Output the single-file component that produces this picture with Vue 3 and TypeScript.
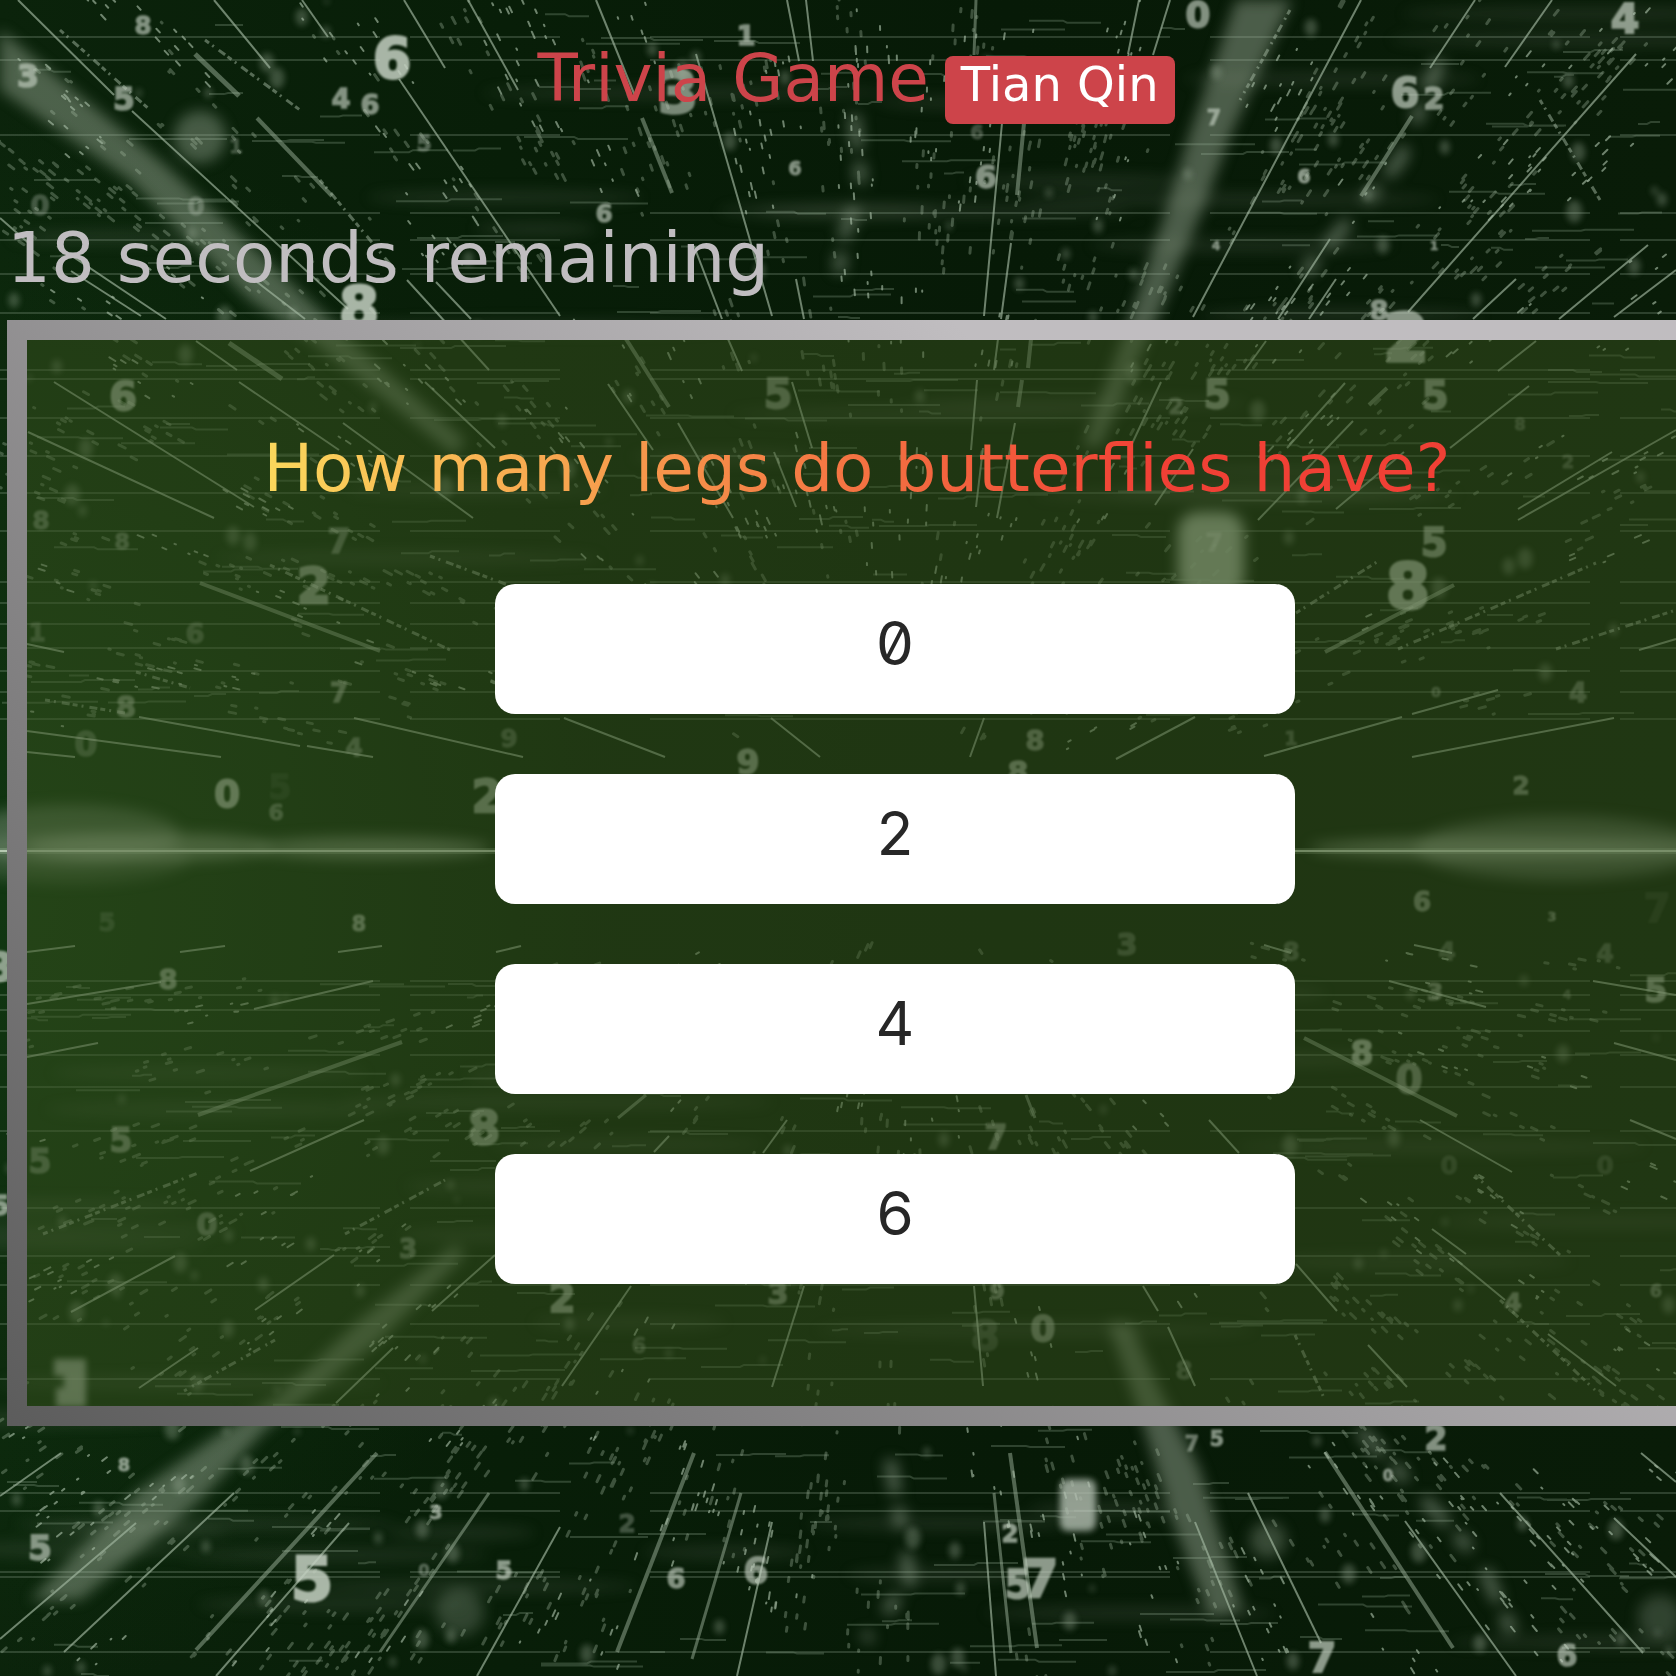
<script setup lang="ts">
import { ref } from 'vue'

type Ray = [number, number, number, number, number?]
type Digit = [string, number, number, number, number?]

const player = 'Tian Qin'
const secondsLeft = ref(18)
const question = 'How many legs do butterflies have?'
const answers = ['0', '2', '4', '6']

// Light rays of the backdrop: x1, y1, x2, y2 and an optional width.
const rays: Ray[] = [
  [132, 111, 348, 309], [18, 0, 114, 95], [399, 79, 560, 316], [214, 0, 270, 68], [302, 0, 328, 37],
  [404, 0, 445, 68], [468, 0, 518, 90], [195, 54, 239, 96, 5], [257, 118, 332, 196, 4], [0, 218, 32, 246],
  [57, 246, 166, 319], [71, 271, 141, 316], [257, 282, 305, 319], [407, 280, 489, 370], [436, 282, 471, 319],
  [196, 341, 237, 370], [239, 382, 339, 450], [229, 343, 282, 379, 5], [54, 382, 254, 507], [28, 432, 214, 518],
  [343, 423, 473, 518], [425, 382, 495, 448], [596, 0, 635, 96], [642, 118, 672, 193, 4], [696, 54, 772, 316],
  [694, 246, 722, 319], [787, 0, 799, 61], [806, 0, 813, 61], [796, 279, 804, 319], [1002, 123, 984, 316],
  [1024, 123, 1017, 195, 4], [1011, 243, 1001, 319], [976, 0, 974, 55, 3], [998, 339, 994, 370], [977, 380, 971, 450],
  [1031, 339, 1028, 368, 4], [1022, 380, 1018, 407, 4], [983, 448, 976, 507], [1015, 423, 997, 518], [626, 339, 669, 407, 4],
  [728, 339, 742, 371], [608, 384, 653, 450], [678, 423, 733, 518], [792, 382, 812, 448], [774, 452, 796, 507],
  [1361, 0, 1193, 317], [1552, 0, 1505, 67], [1475, 0, 1430, 68], [1636, 54, 1408, 312], [1412, 116, 1361, 196, 4],
  [1330, 239, 1278, 319], [1648, 245, 1559, 319], [1676, 270, 1614, 317], [1336, 279, 1309, 319], [1516, 279, 1473, 319],
  [1139, 0, 1128, 54], [1170, 0, 1153, 55], [1266, 341, 1245, 370], [1536, 341, 1498, 371], [1161, 382, 1130, 448],
  [1345, 383, 1287, 448], [1387, 388, 1369, 405, 4], [1353, 421, 1258, 520], [1193, 449, 1155, 505], [1404, 452, 1336, 509],
  [1529, 386, 1450, 448], [1612, 452, 1518, 509], [1676, 430, 1518, 520], [200, 583, 380, 651, 4], [139, 717, 300, 746],
  [307, 746, 373, 757], [354, 718, 523, 757], [27, 731, 221, 757], [27, 752, 75, 757], [27, 644, 64, 652],
  [27, 1004, 161, 982], [254, 1009, 373, 981], [27, 1057, 98, 1043], [198, 1115, 402, 1042, 4], [27, 952, 75, 946],
  [180, 952, 225, 946], [338, 952, 382, 946], [496, 952, 521, 946], [1195, 717, 1116, 759], [1454, 585, 1325, 652, 4],
  [1498, 690, 1412, 714], [1402, 717, 1264, 756], [1614, 718, 1412, 757], [1676, 639, 1639, 650], [1389, 981, 1486, 1007],
  [1593, 981, 1676, 995], [1304, 1038, 1457, 1116, 4], [1614, 1043, 1676, 1060], [1264, 945, 1291, 953], [1414, 945, 1452, 953],
  [564, 718, 665, 757], [771, 718, 820, 757], [984, 718, 970, 757], [618, 1118, 646, 1095, 3], [1026, 1095, 1035, 1118, 3],
  [250, 1171, 364, 1120], [175, 1256, 71, 1312], [334, 1255, 255, 1310], [495, 1255, 432, 1311], [198, 1348, 139, 1388],
  [393, 1348, 336, 1403], [61, 1453, 0, 1496], [136, 1523, 0, 1639], [234, 1493, 64, 1652], [377, 1453, 196, 1650, 4],
  [349, 1523, 216, 1676], [489, 1493, 380, 1652, 3], [560, 1527, 477, 1676], [694, 1453, 617, 1652, 4], [741, 1493, 692, 1659, 3],
  [772, 1522, 737, 1676], [984, 1522, 996, 1676], [994, 1493, 1011, 1653, 3], [1010, 1453, 1037, 1648, 4], [631, 1286, 562, 1386],
  [669, 1136, 654, 1152], [787, 1120, 763, 1153], [804, 1286, 772, 1387], [974, 1286, 983, 1386], [1195, 1522, 1257, 1676],
  [1248, 1493, 1321, 1643], [1325, 1452, 1453, 1648, 4], [1405, 1521, 1516, 1676], [1500, 1493, 1643, 1653], [1614, 1518, 1676, 1577],
  [1641, 1453, 1676, 1482], [1296, 1264, 1337, 1311], [1368, 1345, 1407, 1387], [1448, 1253, 1505, 1300], [1420, 1120, 1512, 1172],
  [1548, 1334, 1616, 1386], [1143, 1286, 1158, 1311], [1168, 1327, 1195, 1386], [1630, 1120, 1676, 1139], [1209, 1120, 1239, 1153],
  [1432, 1229, 1466, 1254],
]

// Dotted trails that follow the same perspective.
const trails: Ray[] = [
  [43, 1234, 198, 1173], [345, 1234, 445, 1180], [275, 1340, 184, 1391], [1296, 613, 1380, 560], [1398, 649, 1596, 563],
  [1556, 649, 1676, 610], [270, 565, 450, 650], [430, 556, 508, 585], [136, 672, 190, 688], [45, 700, 125, 713],
  [1475, 1175, 1560, 1255], [1295, 1335, 1325, 1400], [1500, 1300, 1595, 1390], [60, 30, 150, 110], [205, 40, 300, 110],
  [320, 180, 395, 270], [1540, 100, 1600, 200], [1290, 10, 1240, 100],
]

// Floating digits: character, centre x, centre y, height and opacity.
const digits: Digit[] = [
  ['8', 143, 25, 18], ['3', 28, 75, 23], ['5', 124, 98, 23], ['6', 392, 57, 40, 0.85], ['4', 341, 98, 20], ['6', 370, 104, 20],
  ['5', 424, 143, 16, 0.4], ['0', 196, 206, 18, 0.3], ['0', 40, 205, 20, 0.3], ['8', 359, 307, 42, 0.85], ['6', 123, 395, 29],
  ['7', 339, 541, 24, 0.4], ['8', 122, 541, 16, 0.4], ['8', 41, 520, 18, 0.4], ['1', 236, 146, 14, 0.3], ['3', 678, 92, 42, 0.6],
  ['6', 795, 168, 14], ['6', 986, 176, 23], ['6', 604, 213, 18], ['1', 746, 35, 20], ['5', 778, 393, 30, 0.5], ['6', 977, 132, 14, 0.3],
  ['0', 1198, 14, 26], ['4', 1625, 18, 30, 0.7], ['6', 1405, 92, 30, 0.7], ['2', 1434, 98, 22], ['7', 1214, 117, 15], ['6', 1304, 176, 14, 0.7],
  ['4', 1216, 245, 9], ['1', 1434, 245, 9], ['8', 1379, 310, 20], ['2', 1406, 337, 48], ['5', 1217, 394, 28, 0.6], ['5', 1435, 395, 28, 0.6],
  ['2', 1176, 406, 16, 0.4], ['2', 1568, 461, 13, 0.3], ['5', 1434, 542, 28, 0.6], ['8', 1520, 424, 12, 0.3], ['7', 1214, 542, 18, 0.4],
  ['2', 314, 585, 36, 0.6], ['6', 195, 633, 20, 0.3], ['7', 339, 692, 19, 0.5], ['8', 126, 706, 21, 0.5], ['1', 37, 632, 18, 0.3],
  ['4', 354, 747, 18, 0.4], ['0', 227, 793, 27, 0.7], ['6', 276, 812, 16, 0.4], ['5', 280, 787, 24, 0.1], ['2', 487, 796, 32, 0.6],
  ['9', 509, 738, 18, 0.3], ['5', 107, 922, 18, 0.2], ['8', 359, 923, 15, 0.6], ['8', 168, 979, 20, 0.6], ['3', 0, 967, 28, 0.7],
  ['0', 86, 744, 24, 0.3], ['9', 748, 762, 24, 0.6], ['8', 1018, 772, 22, 0.6], ['8', 1035, 740, 20, 0.5], ['8', 1408, 585, 46, 0.7],
  ['4', 1578, 692, 19, 0.4], ['0', 1436, 692, 10, 0.4], ['1', 1291, 738, 14, 0.3], ['2', 1521, 785, 18, 0.5], ['6', 1422, 901, 19, 0.5],
  ['3', 1552, 916, 9, 0.5], ['7', 1657, 908, 28, 0.1], ['3', 1435, 991, 17, 0.5], ['5', 1656, 990, 24, 0.6], ['8', 1362, 1053, 24, 0.7],
  ['0', 1409, 1079, 28, 0.5], ['3', 1127, 944, 22, 0.3], ['8', 1291, 951, 18, 0.3], ['4', 1447, 951, 18, 0.3], ['4', 1605, 953, 18, 0.3],
  ['4', 1567, 994, 9, 0.3], ['8', 484, 1127, 34, 0.6], ['5', 121, 1140, 24, 0.5], ['5', 40, 1161, 24, 0.4], ['5', 0, 1205, 20],
  ['0', 207, 1224, 22, 0.4], ['3', 408, 1248, 19, 0.4], ['8', 124, 1464, 13, 0.7], ['3', 436, 1512, 14, 0.7], ['5', 40, 1547, 25],
  ['5', 312, 1578, 44, 0.85], ['5', 504, 1570, 18, 0.7], ['0', 424, 1570, 12, 0.4], ['7', 996, 1137, 24, 0.5], ['2', 562, 1298, 28, 0.6],
  ['3', 778, 1293, 22, 0.5], ['9', 997, 1291, 16, 0.5], ['6', 639, 1345, 15, 0.3], ['8', 985, 1335, 30, 0.2], ['0', 1043, 1328, 26, 0.5],
  ['2', 1010, 1533, 18, 0.7], ['5', 1018, 1584, 28, 0.7], ['7', 1040, 1578, 38, 0.7], ['2', 627, 1523, 18, 0.3], ['6', 676, 1578, 20],
  ['6', 756, 1570, 26], ['8', 1184, 1370, 18, 0.3], ['2', 1436, 1438, 24], ['5', 1217, 1438, 15], ['7', 1192, 1443, 15, 0.5],
  ['0', 1388, 1475, 11], ['7', 1322, 1657, 30, 0.7], ['6', 1567, 1655, 22], ['6', 1656, 1290, 13, 0.4], ['4', 1513, 1302, 18, 0.5],
  ['0', 1449, 1165, 18, 0.2], ['0', 1605, 1165, 18, 0.2],
]

const beams = [
  '0,30 165,165 240,235 330,320 350,340 465,440 455,455 310,340 250,300 130,180 0,90',
  '1236,0 1292,0 1230,136 1202,211 1157,318 1100,446 1083,446 1130,318 1166,211 1189,136',
  '455,1245 465,1255 380,1340 265,1430 200,1500 80,1600 30,1600 140,1490 225,1430 280,1395 360,1320',
  '1108,1323 1130,1323 1160,1390 1200,1470 1243,1610 1210,1616 1172,1520 1145,1430',
]

// Faint horizontal scan lines.
const scans = [
  37, 60, 135, 213, 240, 274, 313, 370, 379, 418, 456, 493, 531, 582, 603, 624, 648, 671,
  692, 719, 981, 995, 1010, 1031, 1055, 1087, 1131, 1208, 1256, 1285, 1324, 1379, 1493, 1511, 1572,
  1577, 1652,
]

// Small seeded generator, so that the dust keeps its place between renders.
let seed = 20117
function random(): number {
  seed = (seed * 1664525 + 1013904223) % 4294967296
  return seed / 4294967296
}

const VANISH_X = 900
const VANISH_Y = 850

function dust(clusters: number): string {
  let d = ''
  for (let i = 0; i < clusters; i++) {
    const cx = random() * 1676
    const cy = random() * 1676
    if (cy > 735 && cy < 945) continue
    const dist = Math.hypot(cx - VANISH_X, cy - VANISH_Y)
    const ux = (cx - VANISH_X) / dist
    const uy = (cy - VANISH_Y) / dist
    const count = 4 + Math.floor(random() * 8)
    for (let j = 0; j < count; j++) {
      const along = (random() - 0.5) * 90
      const x = cx + ux * along + (random() - 0.5) * 44
      const y = cy + uy * along + (random() - 0.5) * 20
      const len = 1 + random() * 6
      d += `M${x.toFixed(1)} ${y.toFixed(1)}l${(ux * len).toFixed(1)} ${(uy * len).toFixed(1)}`
    }
  }
  return d
}

function streaks(count: number): string {
  let d = ''
  for (let i = 0; i < count; i++) {
    const x = random() * 1676
    const y = random() * 1676
    if (y > 720 && y < 975) continue
    const len = 12 + random() * 90
    const bend = Math.round((random() - 0.5) * 5)
    d += `M${x.toFixed(0)} ${y.toFixed(1)}h${(len / 2).toFixed(0)}l4 ${bend}h${(len / 2).toFixed(0)}`
  }
  return d
}

const fineDust = dust(420)
const brightDust = dust(190)
const streakPath = streaks(520)
const scanPath = scans.map((y) => `M0 ${y}H1676`).join('')
const motes = Array.from({ length: 220 }, () => ({ x: random() * 1676, y: random() * 1676, r: 2 + random() * 6 })).filter(
  (m) => m.y < 730 || m.y > 980,
)
const bands = Array.from({ length: 70 }, () => ({ x: random() * 1676, y: random() * 1676, w: 60 + random() * 160 })).filter(
  (b) => b.y < 720 || b.y > 980,
)
</script>

<template>
  <main class="page">
    <svg class="backdrop" viewBox="0 0 1676 1676" preserveAspectRatio="xMidYMid slice" aria-hidden="true">
      <defs>
        <linearGradient id="base" x1="0" x2="1" y1="0" y2="0">
          <stop offset="0" stop-color="#0b230b" />
          <stop offset="0.3" stop-color="#081e08" />
          <stop offset="0.6" stop-color="#071a07" />
          <stop offset="1" stop-color="#091c08" />
        </linearGradient>
        <radialGradient id="glow">
          <stop offset="0" stop-color="#1a5a1c" stop-opacity="0.35" />
          <stop offset="1" stop-color="#1a5a1c" stop-opacity="0" />
        </radialGradient>
        <filter id="soft" x="-30%" y="-30%" width="160%" height="160%"><feGaussianBlur stdDeviation="1.2" /></filter>
        <filter id="fine" x="0" y="0" width="100%" height="100%"><feGaussianBlur stdDeviation="0.5" /></filter>
        <filter id="haze" x="-50%" y="-50%" width="200%" height="200%"><feGaussianBlur stdDeviation="7" /></filter>
        <filter id="mote" x="-20%" y="-20%" width="140%" height="140%"><feGaussianBlur stdDeviation="3" /></filter>
      </defs>
      <rect width="1676" height="1676" fill="url(#base)" />
      <ellipse cx="0" cy="900" rx="600" ry="800" fill="url(#glow)" />

      <g filter="url(#haze)" fill="#a9b9a4">
        <ellipse v-for="(b, i) in bands" :key="'b' + i" :cx="b.x" :cy="b.y" :rx="b.w" ry="7" opacity="0.12" />
        <polygon v-for="b in beams" :key="b" :points="b" opacity="0.42" />
        <circle cx="200" cy="137" r="26" opacity="0.38" />
        <rect x="1178" y="512" width="66" height="85" rx="20" opacity="0.85" />
        <ellipse cx="70" cy="835" rx="110" ry="30" opacity="0.32" />
        <ellipse cx="70" cy="858" rx="120" ry="26" opacity="0.2" />
        <ellipse cx="150" cy="847" rx="125" ry="14" opacity="0.5" />
        <ellipse cx="370" cy="848" rx="120" ry="11" opacity="0.5" />
        <ellipse cx="1560" cy="848" rx="145" ry="32" opacity="0.32" />
        <ellipse cx="1510" cy="848" rx="200" ry="11" opacity="0.5" />
        <circle cx="460" cy="1612" r="24" opacity="0.25" />
        <circle cx="1268" cy="1540" r="18" opacity="0.3" />
        <circle cx="1660" cy="1617" r="22" opacity="0.25" />
        <path
          d="M854 115L862 190L842 240L838 290M1440 60L1400 160L1290 290M1360 1430L1480 1560L1520 1650M890 1460L910 1580L865 1640"
          fill="none"
          stroke="#a9b9a4"
          stroke-width="12"
          stroke-dasharray="34 14 20 26"
          opacity="0.45"
        />
      </g>

      <g filter="url(#mote)" fill="#a9b9a4" opacity="0.32">
        <ellipse v-for="(m, i) in motes" :key="i" :cx="m.x" :cy="m.y" :rx="m.r" :ry="m.r * 1.4" />
      </g>

      <g fill="none" stroke="#a3b8a1" filter="url(#fine)">
        <path :d="scanPath" stroke-width="2" stroke-dasharray="380 30 150 90 520 40" opacity="0.24" />
        <path :d="streakPath" stroke-width="2" opacity="0.26" />
        <path :d="fineDust" stroke-width="3" stroke-linecap="round" opacity="0.34" />
        <path :d="brightDust" stroke-width="2" stroke-linecap="round" opacity="0.66" />
        <line
          v-for="(r, i) in rays"
          :key="i"
          :x1="r[0]"
          :y1="r[1]"
          :x2="r[2]"
          :y2="r[3]"
          :stroke-width="r[4] ?? 2"
          :opacity="r[4] ? 0.48 : 0.66"
        />
        <line
          v-for="(t, i) in trails"
          :key="'t' + i"
          :x1="t[0]"
          :y1="t[1]"
          :x2="t[2]"
          :y2="t[3]"
          stroke-width="3"
          stroke-dasharray="5 4 2 6 8 3"
          opacity="0.5"
        />
      </g>
      <rect y="848" width="1676" height="6" fill="#b9d0b4" opacity="0.25" />
      <rect y="850" width="1676" height="2" fill="#c9dcc4" opacity="0.8" />

      <g class="digits" filter="url(#soft)">
        <text
          v-for="(n, i) in digits"
          :key="i"
          :x="n[1]"
          :y="n[2] + n[3] / 2"
          :font-size="n[3] * 1.37"
          :stroke-width="n[3] / 14"
          :opacity="n[4] ?? 0.65"
        >{{ n[0] }}</text>
      </g>
      <rect x="1060" y="1479" width="36" height="52" rx="8" fill="#b4bfb2" opacity="0.8" filter="url(#mote)" />
      <path d="M54 1359H86V1407H56V1388H64V1376H54Z" fill="#b4bfb2" opacity="0.7" filter="url(#mote)" />
    </svg>

    <header class="header">
      <h1 class="title">Trivia Game <span class="badge">{{ player }}</span></h1>
    </header>

    <p class="timer">{{ secondsLeft }} seconds remaining</p>

    <section class="panel">
      <h2 class="question"><span>{{ question }}</span></h2>
      <ul class="answers">
        <li v-for="a in answers" :key="a">
          <button type="button" class="answer">{{ a }}</button>
        </li>
      </ul>
    </section>
  </main>
</template>

<style>
body {
  margin: 0;
  background: #071a08;
}
</style>

<style scoped>
.page {
  position: relative;
  box-sizing: border-box;
  min-height: 100vh;
  padding: 39px 7px 48px;
  overflow: hidden;
  font-family: 'DejaVu Sans', Verdana, sans-serif;
}

.backdrop {
  position: absolute;
  inset: 0;
  width: 100%;
  height: 100%;
}

.digits text {
  fill: #c5d0c2;
  stroke: #c5d0c2;
  font-family: 'DejaVu Sans', Verdana, sans-serif;
  font-weight: 700;
  text-anchor: middle;
}

.header,
.timer,
.panel {
  position: relative;
}

.header {
  padding-left: 36px;
}

.title {
  display: flex;
  align-items: baseline;
  justify-content: center;
  gap: 16px;
  margin: 0;
  color: #cd444a;
  font-size: 66px;
  font-weight: 400;
  line-height: 80px;
}

.badge {
  padding: 4px 16px 16px;
  border-radius: 8px;
  background: #cd444a;
  color: #fff;
  font-size: 48px;
  line-height: 48px;
}

.timer {
  margin: 94px 0 22px;
  color: #c0bdc0;
  font-size: 69px;
  line-height: 80px;
}

.panel {
  margin-right: -38px;
  padding: 89px 0 122px;
  border: 20px solid;
  border-image: linear-gradient(45deg, #5c5c5c 0, #c0bdc0 1450px) 20;
  background: rgba(56, 82, 30, 0.5);
  background-clip: padding-box;
}

.question {
  margin: 0 0 75px;
  font-size: 66px;
  font-weight: 400;
  line-height: 80px;
  text-align: center;
}

.question span {
  background: linear-gradient(90deg, #fbd85c, #f04035 75%);
  background-clip: text;
  -webkit-background-clip: text;
  color: transparent;
}

.answers {
  display: flex;
  flex-direction: column;
  align-items: center;
  gap: 60px;
  margin: 0;
  padding: 0 0 0 76px;
  list-style: none;
}

.answers li {
  width: 100%;
  max-width: 800px;
}

.answer {
  display: block;
  width: 100%;
  padding: 29px 0 41px;
  border: 0;
  border-radius: 20px;
  background: #fff;
  color: #272727;
  font-family: Inter, 'DejaVu Sans', sans-serif;
  font-feature-settings: 'zero' 1;
  font-size: 60px;
  line-height: 60px;
  text-align: center;
  cursor: pointer;
}
</style>
